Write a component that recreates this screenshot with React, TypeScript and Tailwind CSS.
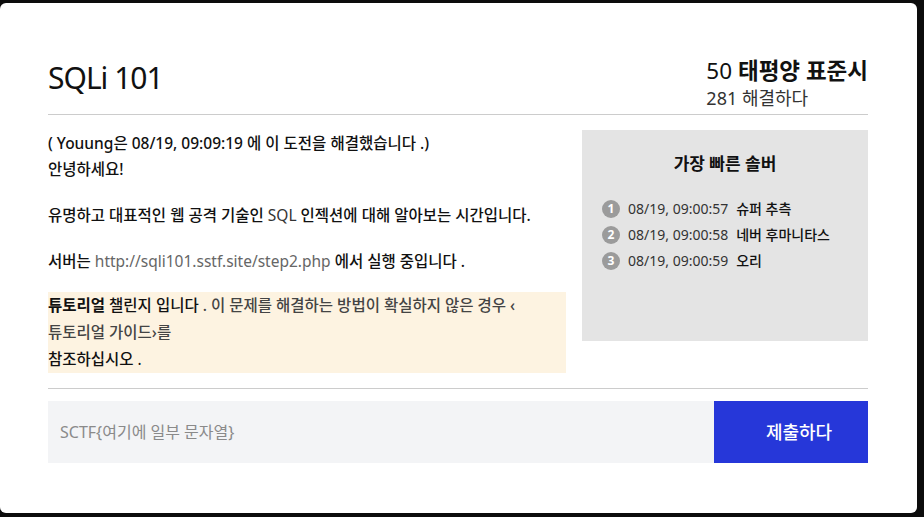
import React from 'react'

const solvers = [
  { rank: 1, time: '08/19, 09:00:57', name: '슈퍼 추측' },
  { rank: 2, time: '08/19, 09:00:58', name: '네버 후마니타스' },
  { rank: 3, time: '08/19, 09:00:59', name: '오리' },
]

export default function App() {
  return (
    <div
      className="w-[924px] h-[517px] bg-[#0c0c0c] pt-[3px] overflow-hidden"
      style={{ fontFamily: '"Noto Sans", "Noto Sans CJK KR", sans-serif' }}
    >
      <div className="w-[917px] h-[510px] bg-white rounded-md pl-12 pr-[49px]">
        {/* Header */}
        <div className="flex justify-between items-start pt-[53px] pb-[3px] border-b border-[#cccccc]">
          <h1 className="mt-[4px] text-[30px] leading-[36px] text-[#111] tracking-[-1px]">SQLi 101</h1>
          <div className="flex flex-col">
            <div className="text-[22.5px] leading-[29px] text-[#111]">
              50 <span className="font-bold">태평양 표준시</span>
            </div>
            <div className="text-[18px] leading-[26px] text-[#333]">281 해결하다</div>
          </div>
        </div>

        {/* Body */}
        <div className="flex gap-4 pt-[15px] pb-[15px] border-b border-[#cccccc]">
          <div className="w-[518px] text-[15.5px] leading-[26px] text-[#111] font-medium">
            <p>( Youung은 08/19, 09:09:19 에 이 도전을 해결했습니다 .)</p>
            <p>안녕하세요!</p>
            <p className="mt-5">유명하고 대표적인 웹 공격 기술인 <span className="font-normal text-[#333]">SQL</span> 인젝션에 대해 알아보는 시간입니다.</p>
            <p className="mt-5">
              서버는 <span className="font-normal text-[#666]">http://sqli101.sstf.site/step2.php</span> 에서 실행 중입니다 .
            </p>
            <div className="mt-[18px] bg-[#fdf3e1] leading-[27px]">
              <p>
                <span className="font-bold text-[#111]">튜토리얼</span> 챌린지 입니다 <span className="text-[#444]">. 이 문제를 해결하는 방법이 확실하지 않은 경우 &lsaquo;</span>
              </p>
              <p className="text-[#444]">튜토리얼 가이드&rsaquo;를</p>
              <p>참조하십시오 <span className="font-normal">.</span></p>
            </div>
          </div>

          <div className="w-[286px] h-[211px] bg-[#e4e4e4] pt-[21px] pl-5">
            <h2 className="text-center pr-5 text-[17px] leading-[26px] font-bold text-[#111]">가장 빠른 솔버</h2>
            <ul className="mt-[19px] text-[14px] leading-[26px]">
              {solvers.map((s) => (
                <li key={s.rank} className="flex items-center">
                  <span className="w-[18px] h-[18px] rounded-full bg-[#9b9b9b] text-white text-[12px] font-bold flex items-center justify-center mr-[8px]">
                    {s.rank}
                  </span>
                  <span className="text-[#333]">{s.time}</span>
                  <span className="ml-2 font-medium text-[#111]">{s.name}</span>
                </li>
              ))}
            </ul>
          </div>
        </div>

        {/* Flag input */}
        <div className="flex mt-[12px] h-[62px]">
          <div className="flex-1 bg-[#f3f4f6] flex items-center pl-3 text-[16px] text-[#8a8a8a]">
            SCTF{'{'}여기에 일부 문자열{'}'}
          </div>
          <button className="w-[154px] bg-[#2637d9] text-white text-[18px] font-medium pl-4">제출하다</button>
        </div>
      </div>
    </div>
  )
}
